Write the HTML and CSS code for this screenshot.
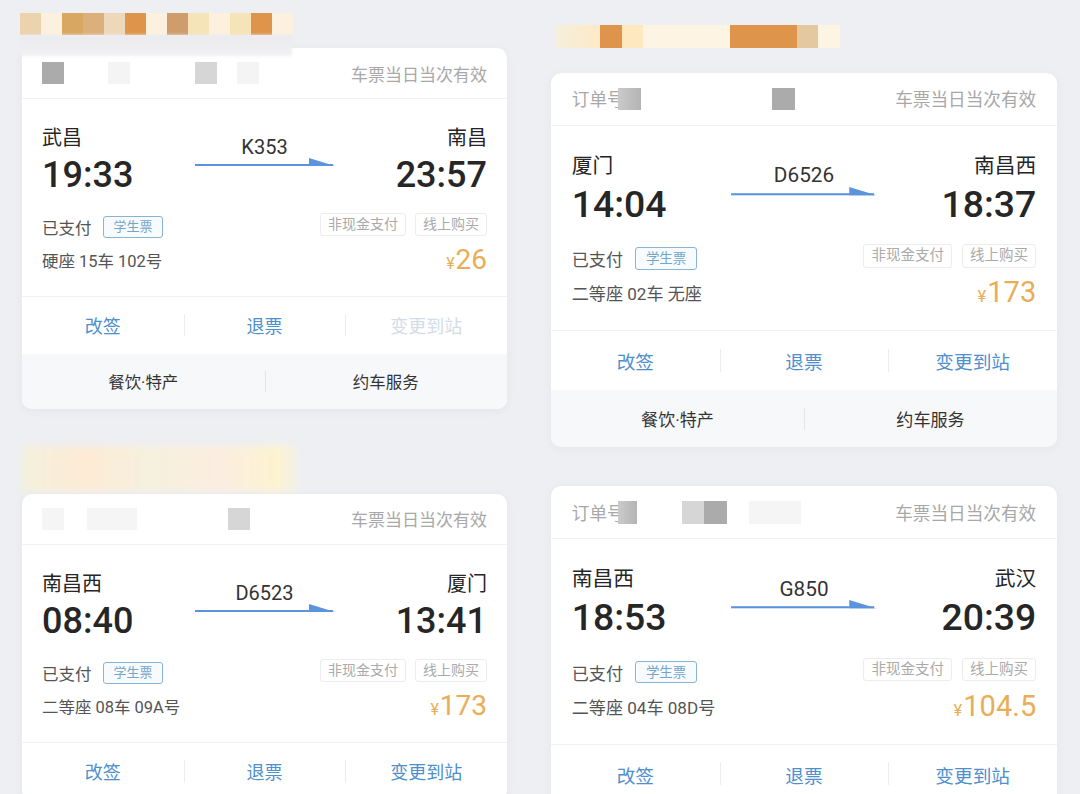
FILE: index.html
```html
<!DOCTYPE html>
<html lang="zh-CN">
<head>
    <meta charset="UTF-8">
    <meta name="viewport" content="width=device-width, initial-scale=1.0">
    <title>车票订单</title>
    <link rel="stylesheet" href="styles.css">
</head>
<body>
<div class="sheet">

    <div class="col col-left">
        <div class="mosaic mosaic-a">
            <span class="sand"></span><span class="cream"></span><span class="ochre"></span><span class="tan"></span>
            <span class="beige"></span><span class="orange"></span><span class="cream"></span><span class="brown"></span>
            <span class="pale"></span><span class="cream"></span><span class="pale"></span><span class="orange"></span>
            <span class="cream"></span>
        </div>
        <div class="smear"></div>

        <article class="ticket">
            <header class="ticket-head">
                <div class="order">
                    <span class="blk dark"></span>
                    <span class="blk faint ml-44"></span>
                    <span class="blk light ml-65"></span>
                    <span class="blk faint ml-20"></span>
                </div>
                <span class="valid">车票当日当次有效</span>
            </header>
            <div class="route">
                <div class="stop">
                    <div class="station">武昌</div>
                    <div class="time">19:33</div>
                </div>
                <div class="train">
                    <div class="train-no">K353</div>
                    <svg class="arrow" viewBox="0 0 140 9"><rect x="0" y="6" width="138" height="2"/><polygon points="114,0 140,8 114,8"/></svg>
                </div>
                <div class="stop end">
                    <div class="station">南昌</div>
                    <div class="time">23:57</div>
                </div>
            </div>
            <div class="info">
                <div class="info-row">
                    <div class="paid">已支付<span class="tag student">学生票</span></div>
                    <div class="tags"><span class="tag">非现金支付</span><span class="tag">线上购买</span></div>
                </div>
                <div class="info-row">
                    <span class="seat">硬座 15车 102号</span>
                    <span class="price"><small>¥</small>26</span>
                </div>
            </div>
            <nav class="actions">
                <a>改签</a><a>退票</a><a class="off">变更到站</a>
            </nav>
            <div class="services"><a>餐饮·特产</a><a>约车服务</a></div>
        </article>

        <div class="haze"></div>

        <article class="ticket ticket-low">
            <header class="ticket-head">
                <div class="order">
                    <span class="blk ghost"></span>
                    <span class="blk ghost wide ml-23"></span>
                    <span class="blk light ml-91"></span>
                </div>
                <span class="valid">车票当日当次有效</span>
            </header>
            <div class="route">
                <div class="stop">
                    <div class="station">南昌西</div>
                    <div class="time">08:40</div>
                </div>
                <div class="train">
                    <div class="train-no">D6523</div>
                    <svg class="arrow" viewBox="0 0 140 9"><rect x="0" y="6" width="138" height="2"/><polygon points="114,0 140,8 114,8"/></svg>
                </div>
                <div class="stop end">
                    <div class="station">厦门</div>
                    <div class="time">13:41</div>
                </div>
            </div>
            <div class="info">
                <div class="info-row">
                    <div class="paid">已支付<span class="tag student">学生票</span></div>
                    <div class="tags"><span class="tag">非现金支付</span><span class="tag">线上购买</span></div>
                </div>
                <div class="info-row">
                    <span class="seat">二等座 08车 09A号</span>
                    <span class="price"><small>¥</small>173</span>
                </div>
            </div>
            <nav class="actions">
                <a>改签</a><a>退票</a><a>变更到站</a>
            </nav>
        </article>
    </div>

    <div class="col col-right">
        <div class="mosaic mosaic-b">
            <span class="w45 pale-fade"></span><span class="w22 orange"></span><span class="w21 pale"></span>
            <span class="w87 cream"></span><span class="w67 orange"></span><span class="w21 beige"></span>
            <span class="w22 cream"></span>
        </div>

        <article class="ticket">
            <header class="ticket-head">
                <div class="order">
                    <span class="order-label">订单号</span>
                    <span class="blk mid overlap"></span>
                    <span class="blk dark ml-132"></span>
                </div>
                <span class="valid">车票当日当次有效</span>
            </header>
            <div class="route">
                <div class="stop">
                    <div class="station">厦门</div>
                    <div class="time">14:04</div>
                </div>
                <div class="train">
                    <div class="train-no">D6526</div>
                    <svg class="arrow" viewBox="0 0 140 9"><rect x="0" y="6" width="138" height="2"/><polygon points="114,0 140,8 114,8"/></svg>
                </div>
                <div class="stop end">
                    <div class="station">南昌西</div>
                    <div class="time">18:37</div>
                </div>
            </div>
            <div class="info">
                <div class="info-row">
                    <div class="paid">已支付<span class="tag student">学生票</span></div>
                    <div class="tags"><span class="tag">非现金支付</span><span class="tag">线上购买</span></div>
                </div>
                <div class="info-row">
                    <span class="seat">二等座 02车 无座</span>
                    <span class="price"><small>¥</small>173</span>
                </div>
            </div>
            <nav class="actions">
                <a>改签</a><a>退票</a><a>变更到站</a>
            </nav>
            <div class="services"><a>餐饮·特产</a><a>约车服务</a></div>
        </article>

        <article class="ticket ticket-low">
            <header class="ticket-head">
                <div class="order">
                    <span class="order-label">订单号</span>
                    <span class="blk mid narrow overlap"></span>
                    <span class="blk light ml-45"></span>
                    <span class="blk dark"></span>
                    <span class="blk ghost wide ml-21"></span>
                </div>
                <span class="valid">车票当日当次有效</span>
            </header>
            <div class="route">
                <div class="stop">
                    <div class="station">南昌西</div>
                    <div class="time">18:53</div>
                </div>
                <div class="train">
                    <div class="train-no">G850</div>
                    <svg class="arrow" viewBox="0 0 140 9"><rect x="0" y="6" width="138" height="2"/><polygon points="114,0 140,8 114,8"/></svg>
                </div>
                <div class="stop end">
                    <div class="station">武汉</div>
                    <div class="time">20:39</div>
                </div>
            </div>
            <div class="info">
                <div class="info-row">
                    <div class="paid">已支付<span class="tag student">学生票</span></div>
                    <div class="tags"><span class="tag">非现金支付</span><span class="tag">线上购买</span></div>
                </div>
                <div class="info-row">
                    <span class="seat">二等座 04车 08D号</span>
                    <span class="price"><small>¥</small>104.5</span>
                </div>
            </div>
            <nav class="actions">
                <a>改签</a><a>退票</a><a>变更到站</a>
            </nav>
        </article>
    </div>

</div>
</body>
</html>
```

FILE: styles.css
```css
body {
    margin: 0;
    height: 794px;
    overflow: hidden;
    background: #eeeff2;
    font-family: Roboto, "Noto Sans CJK SC", sans-serif;
    color: #222;
}
.sheet {
    display: grid;
    grid-template-columns: 485px 506px;
    column-gap: 44px;
    padding-left: 22px;
    align-items: start;
}
.col {
    display: flex;
    flex-direction: column;
}

/* blurred redaction strips */
.mosaic {
    display: flex;
    height: 22px;
    filter: blur(0.6px);
}
.mosaic span {
    width: 21px;
}
.mosaic-a {
    margin: 13px 0 0 -2px;
}
.mosaic-b {
    margin: 25px 0 0 4px;
    height: 23px;
}
.mosaic .sand { background: #ead3ad; }
.mosaic .cream { background: #fcf1de; }
.mosaic .ochre { background: #d8a762; }
.mosaic .tan { background: #dcb07b; }
.mosaic .beige { background: #eed8ba; }
.mosaic .orange { background: #df944c; }
.mosaic .brown { background: #cf9c6c; }
.mosaic .pale { background: #f5e4b8; }
.mosaic .pale-fade { background: linear-gradient(90deg, #f6efdd, #fde9c6); }
.mosaic-b .pale { background: #fde8c0; }
.mosaic-b .cream { background: #fdf4e3; }
.mosaic-b .beige { background: #e3c8a0; }
.mosaic .w21 { width: 21px; }
.mosaic .w22 { width: 22px; }
.mosaic .w45 { width: 45px; }
.mosaic .w67 { width: 67px; }
.mosaic .w87 { width: 87px; }

.smear {
    position: relative;
    z-index: 1;
    width: 272px;
    height: 21px;
    margin: 0 0 -8px -2px;
    background: linear-gradient(#ebebef, #f1f1f3);
    filter: blur(1.5px);
}
.haze {
    width: 280px;
    height: 45px;
    margin-top: 37px;
    background: linear-gradient(90deg, #f4f0dc 0%, #fdebd5 22%, #f6f0de 45%, #fbede0 70%, #fcf3d0 92%, #eeeff2 100%);
    filter: blur(3px);
}

/* ticket card */
.ticket {
    font-size: 16px;
    background: #fff;
    border-radius: 10px;
    overflow: hidden;
    box-shadow: 0 2px 10px rgba(40, 50, 80, 0.05);
}
.col-left .ticket-low {
    margin-top: 3px;
}
.col-right .ticket {
    font-size: 16.6px;
    margin-top: 25px;
}
.col-right .ticket-low {
    margin-top: 39px;
}

.ticket-head {
    height: 3.125em;
    padding: 0 1.25em;
    display: flex;
    align-items: center;
    justify-content: space-between;
    border-bottom: 1px solid #f2f2f4;
}
.order {
    display: flex;
    align-items: center;
}
.order-label,
.valid {
    font-size: 1.0625em;
    color: #a8a8a8;
}
.blk {
    width: 1.375em;
    height: 1.375em;
    filter: blur(0.4px);
}
.blk.dark { background: #ababab; }
.blk.mid { background: linear-gradient(90deg, #cacaca, #b4b4b4); }
.blk.light { background: #d6d6d6; }
.blk.faint { background: #f4f4f5; }
.blk.ghost { background: #f5f5f6; }
.blk.wide { width: 3.125em; }
.blk.narrow { width: 1.125em; }
.blk.overlap { margin-left: -0.4em; }
.ml-20 { margin-left: 1.25em; }
.ml-21 { margin-left: 1.3em; }
.ml-23 { margin-left: 1.4375em; }
.ml-44 { margin-left: 2.75em; }
.ml-45 { margin-left: 2.7em; }
.ml-65 { margin-left: 4.0625em; }
.ml-91 { margin-left: 5.6875em; }
.ml-132 { margin-left: 7.9em; }

.route {
    display: grid;
    grid-template-columns: 1fr 8.75em 1fr;
    padding: 1.6875em 1.25em 0;
}
.stop.end {
    text-align: right;
}
.station {
    font-size: 1.25em;
    line-height: 1.2;
    color: #262626;
}
.time {
    font-size: 2.25em;
    line-height: 1.111;
    margin-top: 0.139em;
    font-weight: 500;
    color: #262626;
}
.train {
    padding-top: 0.5625em;
    text-align: center;
}
.train-no {
    font-size: 1.25em;
    line-height: 1.2;
    color: #333;
}
.arrow {
    display: block;
    width: 8.75em;
    height: 0.5625em;
    margin-top: -0.0625em;
    fill: #5b93dc;
}

.info {
    display: flex;
    flex-direction: column;
    gap: 0.4375em;
    padding: 1.1875em 1.25em 1.4375em;
}
.info-row {
    display: flex;
    align-items: center;
    justify-content: space-between;
    height: 1.625em;
}
.paid,
.seat {
    display: flex;
    align-items: center;
    font-size: 1.03em;
    color: #555;
}
.tags {
    display: flex;
    gap: 0.5625em;
    margin-bottom: 0.3125em;
}
.tag {
    display: inline-block;
    font-size: 0.875em;
    line-height: 1.5em;
    padding: 0 0.5em;
    border: 1px solid #ececec;
    border-radius: 3px;
    color: #aaa;
}
.tag.student {
    font-size: 0.79em;
    padding: 0 0.7em;
    margin-left: 0.92em;
    color: #75a5c9;
    border-color: #8ab4d3;
    background: #f7fbfe;
}
.price {
    font-size: 1.75em;
    line-height: 1;
    color: #e9ad58;
}
.price small {
    font-size: 0.57em;
    margin-right: 1px;
}

.actions {
    display: flex;
    height: 3.5625em;
    border-top: 1px solid #f1f1f3;
}
.actions a {
    flex: 1;
    display: flex;
    align-items: center;
    justify-content: center;
    font-size: 1.125em;
    color: #4f8fcd;
}
.actions a + a {
    background: linear-gradient(#ececee, #ececee) left center / 1px 1.25em no-repeat;
}
.actions a.off {
    color: #d3dce7;
}
.services {
    display: flex;
    height: 3.4375em;
    background: #f7f8fa;
}
.services a {
    flex: 1;
    display: flex;
    align-items: center;
    justify-content: center;
    font-size: 1.03em;
    color: #333;
}
.services a + a {
    background: linear-gradient(#e4e5e8, #e4e5e8) left center / 1px 1.3em no-repeat;
}
```
